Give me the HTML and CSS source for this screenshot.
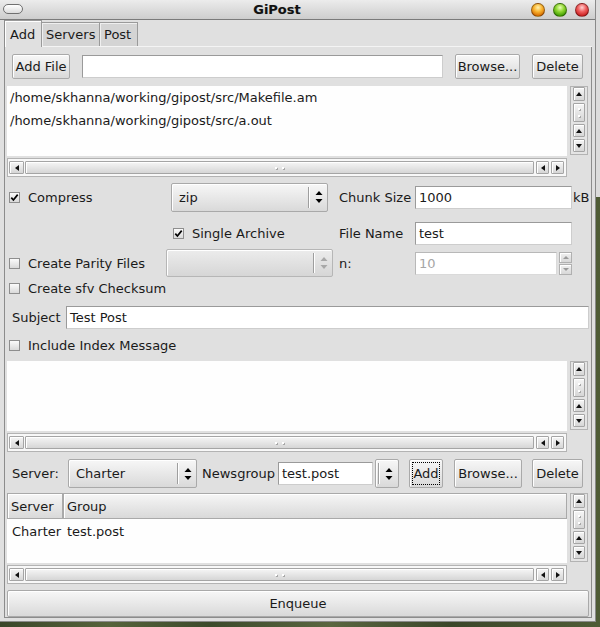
FILE: index.html
```html
<!DOCTYPE html>
<html>
<head>
<meta charset="utf-8">
<title>GiPost</title>
<link rel="stylesheet" href="styles.css">
</head>
<body>
<div class="screen">
  <div class="win">
    <div class="titlebar">
      <div class="tb-pill"></div>
      <div class="tb-title">GiPost</div>
      <div class="tb-lights">
        <span class="light l-orange"></span>
        <span class="light l-green"></span>
        <span class="light l-red"></span>
      </div>
    </div>
    <div class="client">
      <div class="tabwidget">
        <div class="tabs">
          <div class="tab active">Add</div>
          <div class="tab t-servers">Servers</div>
          <div class="tab t-post">Post</div>
        </div>
        <div class="panel">
          <div class="row r-files">
            <button class="btn b-addfile">Add File</button>
            <div class="field f-path"></div>
            <button class="btn b-browse">Browse...</button>
            <button class="btn b-delete">Delete</button>
          </div>

          <div class="sv sv-files">
            <div class="sv-body list">
              <div class="li">/home/skhanna/working/gipost/src/Makefile.am</div>
              <div class="li">/home/skhanna/working/gipost/src/a.out</div>
            </div>
            <div class="vbar">
              <div class="sbtn vb-a up"></div>
              <div class="sthumb vthumb"></div>
              <div class="sbtn vb-b up"></div>
              <div class="sbtn vb-b down"></div>
            </div>
            <div class="hbar">
              <div class="sbtn hb-first left"></div>
              <div class="sthumb hthumb"></div>
              <div class="sbtn hb-b left"></div>
              <div class="sbtn hb-b right"></div>
            </div>
          </div>

          <div class="opts">
            <div class="cell c-check"><span class="cb checked"><svg width="11" height="11" viewBox="0 0 11 11"><path d="M2.3 5.6 L4.4 8 L8.7 2.6" fill="none" stroke="#000" stroke-width="1.7"/></svg></span><span class="cbl">Compress</span></div>
            <div class="cell"><div class="btn combo cb-zip"><span class="ctext">zip</span><span class="csep"></span><span class="carr"><svg width="8" height="14" viewBox="0 0 8 14"><path d="M4 1 L7.5 5 L0.5 5 Z M4 13 L7.5 9 L0.5 9 Z" fill="#000"/></svg></span></div></div>
            <div class="cell c-label">Chunk Size</div>
            <div class="cell"><div class="field f-opt">1000</div></div>
            <div class="cell c-kb">kB</div>

            <div class="cell r2"></div>
            <div class="cell c-check c-single r2"><span class="cb checked"><svg width="11" height="11" viewBox="0 0 11 11"><path d="M2.3 5.6 L4.4 8 L8.7 2.6" fill="none" stroke="#000" stroke-width="1.7"/></svg></span><span class="cbl">Single Archive</span></div>
            <div class="cell c-label r2">File Name</div>
            <div class="cell r2"><div class="field f-opt">test</div></div>
            <div class="cell r2"></div>

            <div class="cell c-check"><span class="cb"></span><span class="cbl">Create Parity Files</span></div>
            <div class="cell"><div class="btn combo disabled cb-parity"><span class="ctext"></span><span class="csep"></span><span class="carr"><svg width="8" height="14" viewBox="0 0 8 14"><path d="M4 1 L7.5 5 L0.5 5 Z M4 13 L7.5 9 L0.5 9 Z" fill="#a8a8a8"/></svg></span></div></div>
            <div class="cell c-label">n:</div>
            <div class="cell spin">
              <div class="field f-spin disabled">10</div>
              <div class="spinbtns">
                <div class="spb up"></div>
                <div class="spb down"></div>
              </div>
            </div>
            <div class="cell"></div>

            <div class="cell c-check c-wide"><span class="cb"></span><span class="cbl">Create sfv Checksum</span></div>
          </div>

          <div class="row r-subject">
            <span class="lbl l-subject">Subject</span>
            <div class="field f-subject">Test Post</div>
          </div>

          <div class="row r-include">
            <span class="cb"></span><span class="cbl">Include Index Message</span>
          </div>

          <div class="sv sv-msg">
            <div class="sv-body"></div>
            <div class="vbar">
              <div class="sbtn vb-a up"></div>
              <div class="sthumb vthumb"></div>
              <div class="sbtn vb-b up"></div>
              <div class="sbtn vb-b down"></div>
            </div>
            <div class="hbar">
              <div class="sbtn hb-first left"></div>
              <div class="sthumb hthumb"></div>
              <div class="sbtn hb-b left"></div>
              <div class="sbtn hb-b right"></div>
            </div>
          </div>

          <div class="row r-server">
            <span class="lbl l-server">Server:</span>
            <div class="btn combo cb-server"><span class="ctext">Charter</span><span class="csep"></span><span class="carr"><svg width="8" height="14" viewBox="0 0 8 14"><path d="M4 1 L7.5 5 L0.5 5 Z M4 13 L7.5 9 L0.5 9 Z" fill="#000"/></svg></span></div>
            <span class="lbl l-news">Newsgroup</span>
            <div class="field f-news">test.post</div>
            <div class="btn b-spin"><span class="bsep"></span><span class="carr"><svg width="8" height="14" viewBox="0 0 8 14"><path d="M4 1 L7.5 5 L0.5 5 Z M4 13 L7.5 9 L0.5 9 Z" fill="#000"/></svg></span></div>
            <button class="btn b-add"><span class="focus">Add</span></button>
            <button class="btn b-browse2">Browse...</button>
            <button class="btn b-delete2">Delete</button>
          </div>

          <div class="sv sv-table">
            <div class="sv-body table">
              <div class="thead">
                <div class="th th-server">Server</div>
                <div class="th th-group">Group</div>
              </div>
              <div class="tr">
                <div class="td td-server">Charter</div>
                <div class="td td-group">test.post</div>
              </div>
            </div>
            <div class="vbar">
              <div class="sbtn vb-a up"></div>
              <div class="sthumb vthumb"></div>
              <div class="sbtn vb-b up"></div>
              <div class="sbtn vb-b down"></div>
            </div>
            <div class="hbar">
              <div class="sbtn hb-first left"></div>
              <div class="sthumb hthumb"></div>
              <div class="sbtn hb-b left"></div>
              <div class="sbtn hb-b right"></div>
            </div>
          </div>

          <button class="btn b-enqueue">Enqueue</button>
        </div>
      </div>
    </div>
  </div>
  <div class="side"></div>
</div>
</body>
</html>
```

FILE: styles.css
```css
* { box-sizing: border-box; }
html, body { margin: 0; padding: 0; }
body {
  width: 600px;
  height: 627px;
  overflow: hidden;
  font: 13px "DejaVu Sans", sans-serif;
  color: #1a1a1a;
  background: #3e4a2c;
}
.screen {
  display: flex;
  align-items: flex-start;
  width: 600px;
  height: 627px;
  background: linear-gradient(90deg, #3a4629 0%, #56633b 18%, #3c4a2b 35%, #5a6640 55%, #3b4629 75%, #4f5c36 100%);
}
.side {
  width: 4px;
  height: 197px;
  background: #dcdcdc;
}
.win {
  width: 596px;
  height: 622px;
  flex: none;
  background: #e0e0e0;
  display: flex;
  flex-direction: column;
  border-right: 1px solid #8a8a8a;
  border-bottom: 1px solid #8a8a8a;
}

/* title bar */
.titlebar {
  height: 20px;
  flex: none;
  display: flex;
  align-items: center;
  background: linear-gradient(#ececec, #cdcdcd);
  border-bottom: 1px solid #7a7a7a;
}
.tb-pill {
  width: 20px;
  height: 10px;
  margin-left: 3px;
  margin-top: -1px;
  border: 1px solid #707070;
  border-radius: 5px;
  background: linear-gradient(#ffffff, #dcdcdc);
}
.tb-title {
  flex: 1;
  text-align: center;
  font-weight: bold;
  font-size: 13px;
  color: #111;
  text-shadow: 0 0 1px rgba(0,0,0,0.2);
}
.tb-lights {
  display: flex;
  gap: 8px;
  margin-right: 6px;
}
.light {
  width: 14px;
  height: 14px;
  border-radius: 50%;
  border: 1px solid rgba(0,0,0,0.35);
}
.l-orange { background: radial-gradient(circle at 50% 30%, #fff2b0 0%, #f9b531 40%, #d46a00 80%, #a84c00 100%); }
.l-green  { background: radial-gradient(circle at 50% 30%, #eaffb5 0%, #8fd632 40%, #3f9a00 80%, #2b6e00 100%); }
.l-red    { background: radial-gradient(circle at 50% 30%, #ffd2d2 0%, #f06060 40%, #c81e1e 80%, #8e0d0d 100%); }

/* client / tabs */
.client {
  flex: 1;
  display: flex;
  padding: 0 4px 3px 4px;
}
.tabwidget {
  flex: 1;
  display: flex;
  flex-direction: column;
  border-left: 1px solid #8c8c8c;
}
.tabs {
  height: 27px;
  flex: none;
  display: flex;
  align-items: flex-end;
  border-bottom: 1px solid #f4f4f4;
}
.tab {
  height: 24px;
  line-height: 23px;
  padding-left: 4px;
  background: #d4d4d4;
  border: 1px solid #9a9a9a;
  border-left: none;
  border-bottom: none;
  box-shadow: inset 1px 1px #efefef;
}
.tab.active {
  height: 27px;
  line-height: 27px;
  width: 37px;
  padding-left: 5px;
  margin-bottom: -1px;
  background: #e0e0e0;
  box-shadow: inset 1px 1px #ffffff;
}
.t-servers { width: 58px; }
.t-post { width: 38px; }

.panel {
  flex: 1;
  display: flex;
  flex-direction: column;
  padding: 0 2px;
  border-right: 1px solid #8c8c8c;
  border-bottom: 1px solid #8c8c8c;
}

/* generic widgets */
.btn {
  font: inherit;
  color: inherit;
  padding: 0;
  margin: 0;
  border: 1px solid #a9a9a9;
  border-radius: 2px;
  background: linear-gradient(#f7f7f7, #d9d9d9);
  box-shadow: inset 1px 1px #ffffff;
  display: flex;
  align-items: center;
  justify-content: center;
}
.field {
  background: #ffffff;
  border: 1px solid;
  border-color: #9a9a9a #cdcdcd #cdcdcd #9a9a9a;
  display: flex;
  align-items: center;
  padding-left: 3px;
}
.field.disabled { color: #a6a6a6; border-color: #b8b8b8 #dadada #dadada #b8b8b8; }
.row {
  display: flex;
  align-items: center;
  flex: none;
}
.cb {
  width: 11px;
  height: 11px;
  flex: none;
  border: 1px solid #8e8e8e;
  background: linear-gradient(#fbfbfb, #d9d9d9);
  display: flex;
  align-items: center;
  justify-content: center;
}
.cb svg { display: block; margin: -1px; }
.cbl { margin-left: 8px; white-space: nowrap; }

/* row 1 */
.r-files { margin-top: 7px; height: 25px; }
.b-addfile { margin-left: 5px; width: 58px; height: 25px; }
.f-path { margin-left: 12px; width: 361px; height: 23px; }
.b-browse { margin-left: 12px; width: 65px; height: 25px; }
.b-delete { margin-left: 12px; width: 51px; height: 25px; }

/* scroll views */
.sv {
  flex: none;
  display: grid;
  grid-template-columns: 560px 18px;
  grid-template-rows: 70px 19px;
  column-gap: 3px;
  row-gap: 2px;
}
.sv-files { margin-top: 7px; }
.sv-msg { margin-top: 5px; }
.sv-table { margin-top: 6px; }
.sv-body {
  grid-column: 1;
  grid-row: 1;
  background: #fefefe;
  overflow: hidden;
}
.list .li {
  height: 23px;
  line-height: 23px;
  padding-left: 3px;
  white-space: nowrap;
}
.vbar {
  grid-column: 2;
  grid-row: 1;
  height: 69px;
  border: 1px solid #b3b3b3;
  background: #e4e4e4;
  padding: 0 2px;
  display: flex;
  flex-direction: column;
  gap: 2px;
}
.hbar {
  grid-column: 1;
  grid-row: 2;
  border: 1px solid #b3b3b3;
  background: #f8f8f8;
  padding: 2px 2px 2px 1px;
  display: flex;
}
.sbtn, .sthumb {
  border: 1px solid #a5a5a5;
  border-radius: 1px;
  background: linear-gradient(#f6f6f6, #d6d6d6);
  box-shadow: inset 1px 1px #ffffff;
  display: flex;
  align-items: center;
  justify-content: center;
}
.vb-a { height: 14px; }
.vthumb { height: 19px; }
.vb-b { height: 13px; }
.hb-first { width: 15px; }
.hthumb { flex: 1; margin-left: 1px; }
.hb-b { width: 13px; margin-left: 2px; }

.sbtn::after { content: ""; display: block; width: 0; height: 0; }
.sbtn.up::after { border-left: 3px solid transparent; border-right: 3px solid transparent; border-bottom: 4px solid #111; }
.sbtn.down::after { border-left: 3px solid transparent; border-right: 3px solid transparent; border-top: 4px solid #111; }
.sbtn.left::after { border-top: 3px solid transparent; border-bottom: 3px solid transparent; border-right: 4px solid #111; }
.sbtn.right::after { border-top: 3px solid transparent; border-bottom: 3px solid transparent; border-left: 4px solid #111; }

.sthumb::after {
  content: "";
  display: block;
  width: 2px;
  height: 2px;
  background: #ffffff;
}
.hthumb::after { margin-left: -7px; box-shadow: 1px 1px #a8a8a8, 7px 0 #ffffff, 8px 1px #a8a8a8; }
.vthumb::after { margin-top: -7px; box-shadow: 1px 1px #a8a8a8, 0 7px #ffffff, 1px 8px #a8a8a8; }

/* options grid */
.opts {
  margin-top: 5px;
  flex: none;
  display: grid;
  grid-template-columns: 159px 167px 82px 157px 1fr;
  grid-template-rows: 30px 35px 32px 19px;
  align-items: center;
}
.cell { display: flex; align-items: center; }
.cell.r2 { margin-top: 8px; }
.c-check { padding-left: 2px; }
.c-single { padding-left: 7px; }
.c-wide { grid-column: 1 / span 2; }
.c-label { padding-left: 6px; }
.c-kb { padding-left: 1px; }
.f-opt { width: 157px; height: 23px; }

.combo { justify-content: flex-start; }
.combo .ctext { flex: 1; padding-left: 7px; white-space: nowrap; }
.csep, .bsep {
  width: 2px;
  align-self: stretch;
  margin: 3px 0;
  border-left: 1px solid #9e9e9e;
  border-right: 1px solid #ffffff;
}
.carr { width: 17px; display: flex; align-items: center; justify-content: center; }
.carr svg { display: block; }
.cb-zip { margin-left: 5px; width: 157px; height: 29px; }
.cb-parity { width: 167px; height: 28px; }
.combo.disabled { background: linear-gradient(#ececec, #d6d6d6); border-color: #b6b6b6; }

.spin { gap: 2px; }
.f-spin { width: 143px; height: 23px; }
.spinbtns { display: flex; flex-direction: column; gap: 1px; }
.spb {
  width: 13px;
  height: 11px;
  border: 1px solid #b0b0b0;
  background: linear-gradient(#f0f0f0, #d8d8d8);
  box-shadow: inset 1px 1px #fff;
  display: flex;
  align-items: center;
  justify-content: center;
}
.spb::after { content: ""; display: block; width: 0; height: 0; }
.spb.up::after { border-left: 3px solid transparent; border-right: 3px solid transparent; border-bottom: 3px solid #9a9a9a; }
.spb.down::after { border-left: 3px solid transparent; border-right: 3px solid transparent; border-top: 3px solid #9a9a9a; }

/* subject / include */
.r-subject { margin-top: 8px; height: 22px; }
.l-subject { margin-left: 5px; width: 54px; }
.f-subject { flex: 1; height: 23px; }
.r-include { margin-top: 6px; height: 22px; padding-left: 2px; }

/* server row */
.r-server { margin-top: 7px; height: 29px; }
.lbl { white-space: nowrap; }
.l-server { margin-left: 5px; width: 56px; }
.cb-server { width: 129px; height: 29px; }
.l-news { margin-left: 5px; width: 76px; }
.f-news { width: 95px; height: 23px; }
.b-spin { margin-left: 2px; width: 24px; height: 29px; justify-content: flex-start; padding-left: 2px; }
.b-spin .carr { width: 18px; }
.b-add { margin-left: 10px; width: 34px; height: 29px; padding: 2px; }
.focus {
  flex: 1;
  align-self: stretch;
  display: flex;
  align-items: center;
  justify-content: center;
  border: 1px dotted #000;
}
.b-browse2 { margin-left: 11px; width: 68px; height: 29px; }
.b-delete2 { margin-left: 10px; width: 51px; height: 29px; }

/* table */
.sv-table { margin-top: 5px; }
.table { display: flex; flex-direction: column; }
.thead { display: flex; height: 26px; flex: none; }
.th {
  border: 1px solid #a9a9a9;
  background: linear-gradient(#f6f6f6, #d9d9d9);
  box-shadow: inset 1px 1px #ffffff;
  display: flex;
  align-items: center;
  padding-left: 3px;
}
.th-server { width: 56px; }
.th-group { flex: 1; }
.tr { display: flex; padding-top: 2px; height: 24px; }
.td { line-height: 22px; white-space: nowrap; }
.td-server { width: 60px; padding-left: 5px; }

/* enqueue */
.b-enqueue { margin-top: 6px; width: 582px; height: 27px; flex: none; }
```
